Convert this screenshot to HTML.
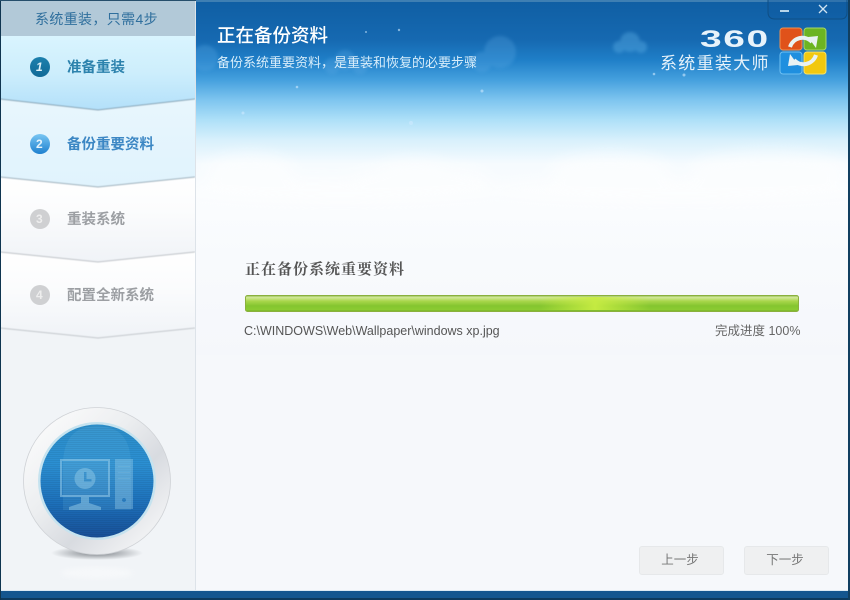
<!DOCTYPE html>
<html lang="zh"><head><meta charset="utf-8"><title>360系统重装大师</title>
<style>
html,body{margin:0;padding:0}
body{width:850px;height:600px;overflow:hidden;position:relative;background:#f6f8fb;font-family:"Liberation Sans","Noto Sans CJK SC",sans-serif}
.t{position:absolute;white-space:nowrap;line-height:1}
.tc{font-family:"Noto Sans CJK TC",sans-serif}
svg{position:absolute;left:0;top:0}
.btn{position:absolute;top:546px;width:85px;height:29px;box-sizing:border-box;background:#eff0f1;border:1px solid #e6e8ea;border-radius:3px;color:#777;font-size:12.500px;line-height:27px;text-align:center;padding-right:3px}
</style></head><body>
<svg width="850" height="600" viewBox="0 0 850 600">
<defs>
<linearGradient id="sky" gradientUnits="userSpaceOnUse" x1="0" y1="0" x2="0" y2="205">
<stop offset="0" stop-color="#0f5ea3"/><stop offset=".195" stop-color="#1669b1"/><stop offset=".293" stop-color="#1f7fc8"/><stop offset=".39" stop-color="#45a0de"/><stop offset=".488" stop-color="#7ec5ef"/><stop offset=".585" stop-color="#aee0f8"/><stop offset=".683" stop-color="#d8f0fc"/><stop offset=".8" stop-color="#f6fbfe"/><stop offset="1" stop-color="#fafcfe"/></linearGradient>
<linearGradient id="s1" x1="0" y1="0" x2="0" y2="1"><stop offset="0" stop-color="#d9f4fe"/><stop offset=".5" stop-color="#cdeefc"/><stop offset="1" stop-color="#b3e0fa"/></linearGradient>
<linearGradient id="s2" x1="0" y1="0" x2="0" y2="1"><stop offset="0" stop-color="#e8f6fd"/><stop offset="1" stop-color="#e0f3fd"/></linearGradient>
<linearGradient id="s3" x1="0" y1="0" x2="0" y2="1"><stop offset="0" stop-color="#ffffff"/><stop offset=".4" stop-color="#fbfcfd"/><stop offset="1" stop-color="#f0f3f7"/></linearGradient>
<linearGradient id="bar" x1="0" y1="0" x2="0" y2="1"><stop offset="0" stop-color="#8fb84e"/><stop offset=".12" stop-color="#d3e99a"/><stop offset=".35" stop-color="#a9d64b"/><stop offset=".65" stop-color="#84c52f"/><stop offset=".9" stop-color="#8ccb32"/><stop offset="1" stop-color="#6fa428"/></linearGradient>
<linearGradient id="glow" x1="0" y1="0" x2="1" y2="0"><stop offset="0" stop-color="#c7ec42" stop-opacity="0"/><stop offset=".5" stop-color="#c7ec42" stop-opacity=".95"/><stop offset="1" stop-color="#c7ec42" stop-opacity="0"/></linearGradient>
<linearGradient id="ring" x1="0" y1="0" x2="1" y2="1"><stop offset="0" stop-color="#ffffff"/><stop offset=".4" stop-color="#eceef0"/><stop offset=".62" stop-color="#d8dbe0"/><stop offset="1" stop-color="#ffffff"/></linearGradient>
<linearGradient id="orb" x1="0" y1="0" x2="0" y2="1"><stop offset="0" stop-color="#2d8fcb"/><stop offset=".35" stop-color="#2b8fd2"/><stop offset=".7" stop-color="#1d70ba"/><stop offset="1" stop-color="#174f97"/></linearGradient>
<linearGradient id="n1" x1="0" y1="0" x2="0" y2="1"><stop offset="0" stop-color="#1d80ad"/><stop offset="1" stop-color="#116a97"/></linearGradient>
<linearGradient id="n2" x1="0" y1="0" x2="0" y2="1"><stop offset="0" stop-color="#79c6f3"/><stop offset="1" stop-color="#1e80cf"/></linearGradient>
<linearGradient id="fade" x1="0" y1="0" x2="0" y2="1"><stop offset="0" stop-color="#fafcfe"/><stop offset="1" stop-color="#f5f7fb"/></linearGradient>
<radialGradient id="shadow"><stop offset="0" stop-color="#3d434a" stop-opacity=".65"/><stop offset="1" stop-color="#3d434a" stop-opacity="0"/></radialGradient>
<filter id="b3" x="-30%" y="-60%" width="160%" height="220%"><feGaussianBlur stdDeviation="7"/></filter>
<filter id="b1"><feGaussianBlur stdDeviation="2.500"/></filter>
<filter id="b0" x="-5%" y="-30%" width="110%" height="160%"><feGaussianBlur stdDeviation=".5"/></filter>
<filter id="bc"><feGaussianBlur stdDeviation="1.500"/></filter>
<pattern id="lines" width="2" height="2" patternUnits="userSpaceOnUse"><rect width="2" height="1" fill="#000" opacity=".06"/></pattern>
</defs>

<rect width="850" height="600" fill="#f6f8fb"/>
<rect x="196" y="0" width="654" height="205" fill="url(#sky)"/>
<rect x="196" y="205" width="654" height="386" fill="#f6f8fb"/>
<rect x="196" y="205" width="654" height="150" fill="url(#fade)"/>
<rect x="196" y="0" width="654" height="2" fill="#3e7fb3"/>
<g fill="#5eaee6" filter="url(#bc)">
<g opacity=".28"><circle cx="205" cy="58" r="13"/><circle cx="345" cy="60" r="10"/><circle cx="332" cy="66" r="8"/><circle cx="360" cy="66" r="8"/><circle cx="500" cy="52" r="16"/><circle cx="482" cy="62" r="10"/></g>
<g opacity=".4"><circle cx="630" cy="42" r="10"/><circle cx="619" cy="47" r="6"/><circle cx="641" cy="47" r="6"/></g>
</g>
<g fill="#fff" filter="url(#b3)" opacity=".5">
<ellipse cx="250" cy="172" rx="45" ry="20"/><ellipse cx="420" cy="178" rx="70" ry="14"/>
<ellipse cx="415" cy="172" rx="40" ry="14"/><ellipse cx="610" cy="172" rx="60" ry="20"/><ellipse cx="770" cy="170" rx="80" ry="20"/><ellipse cx="340" cy="190" rx="170" ry="14"/><ellipse cx="680" cy="190" rx="200" ry="14"/>
</g>
<g fill="#cfeaff" opacity=".6"><circle cx="399" cy="30" r="1.200"/><circle cx="366" cy="32" r="1"/><circle cx="297" cy="87" r="1.300"/><circle cx="482" cy="91" r="1.500"/><circle cx="411" cy="123" r="2"/><circle cx="243" cy="113" r="1.500"/><circle cx="684" cy="75" r="1.500"/><circle cx="654" cy="74" r="1.300"/></g>

<!-- sidebar -->
<rect x="0" y="0" width="196" height="600" fill="#f1f4f7"/>
<rect x="1" y="0" width="194" height="36" fill="#b2c9d8"/>
<polygon points="0,338 98,338 195,327 195,591 0,591" fill="#f1f4f7"/>
<polygon points="0,252 98,262 195,252 195,328 98,338 0,328" fill="url(#s3)"/>
<polygon points="0,177 98,187 195,177 195,252 98,262 0,252" fill="url(#s3)"/>
<polygon points="0,99 98,110 195,99 195,177 98,187 0,177" fill="url(#s2)"/>
<polygon points="0,36 195,36 195,99 98,110 0,99" fill="url(#s1)"/>
<g fill="none" stroke-width="1" filter="url(#b0)">
<polyline points="0,99 98,110 195,99" stroke="#8aa7b8"/>
<polyline points="0,177 98,187 195,177" stroke="#a0b2bd"/>
<polyline points="0,252 98,262 195,252" stroke="#bfc3c8"/>
<polyline points="0,328 98,338 195,328" stroke="#c3c7cc"/>
</g>
<rect x="195" y="0" width="1" height="591" fill="#dde3e9"/>

<circle cx="40" cy="67" r="10" fill="url(#n1)"/>
<circle cx="40" cy="144" r="10" fill="url(#n2)"/>
<circle cx="40" cy="219" r="10" fill="#cfd0d2"/>
<circle cx="40" cy="295" r="10" fill="#cfd0d2"/>

<!-- orb -->
<ellipse cx="97" cy="553" rx="46" ry="7" fill="url(#shadow)"/>
<ellipse cx="97" cy="573" rx="36" ry="6" fill="#fff" opacity=".35" filter="url(#b1)"/>
<circle cx="97" cy="481" r="73.500" fill="url(#ring)" stroke="#cfd2d6" stroke-width=".8"/>
<circle cx="97" cy="481" r="59" fill="#c6e3ef"/>
<circle cx="97" cy="481" r="56.500" fill="url(#orb)"/>
<path d="M63 465Q63 426 97 426T131 465V510H63Z" fill="#8bd5f2" opacity=".12"/>
<circle cx="97" cy="481" r="56.500" fill="url(#lines)"/>
<g fill="#a5d6ee">
<path opacity=".5" fill-rule="evenodd" d="M60 459h50v38H60zM62 461v34h46v-34z"/>
<rect x="62" y="461" width="46" height="34" opacity=".1"/>
<path opacity=".45" d="M81 497h8v6l12 4v3H69v-3l12-4z"/>
<path opacity=".4" fill-rule="evenodd" d="M85 468a10.500 10.500 0 1 0 .01 0zM84 472h2.500v7h5v2.500H84z"/>
<path opacity=".35" fill-rule="evenodd" d="M115 459h18v50h-18zM124 498a2 2 0 1 0 .01 0z"/>
<path opacity=".15" d="M118 466h12v1h-12zM118 472h12v1h-12zM118 478h12v1h-12z"/>
</g>

<!-- progress bar -->
<rect x="245.500" y="295.500" width="553" height="16" rx="2" fill="url(#bar)" stroke="#8ab03d"/>
<rect x="540" y="297" width="110" height="13" fill="url(#glow)"/>

<!-- logo -->
<rect x="780" y="28" width="22" height="22" rx="3" fill="#e0521a" stroke="#f09050"/>
<rect x="804" y="28" width="22" height="22" rx="3" fill="#6cb422" stroke="#a7d76a"/>
<rect x="780" y="52" width="22" height="22" rx="3" fill="#1f8fdf" stroke="#6fc0f2"/>
<rect x="804" y="52" width="22" height="22" rx="3" fill="#f2c80f" stroke="#f9e266"/>
<g fill="none" stroke="#e9f2f3" stroke-width="4"><path d="M790 47A13 13 0 0 1 812 42"/><path d="M816 55A13 13 0 0 1 794 60"/></g>
<polygon points="808,37 818,36 816,48" fill="#e9f2f3"/><polygon points="798,65 788,66 790,54" fill="#e9f2f3"/>

<!-- window buttons -->
<path d="M768 0V12Q768 19 775 19H841Q847 19 847 12V0" fill="#0f5b9e" fill-opacity=".3" stroke="#0f4f85"/>
<rect x="780" y="10" width="9" height="2" fill="#b7d5ea"/>
<path d="M819 5l8 8M827 5l-8 8" stroke="#cfe3f1" stroke-width="1.300"/>

<!-- frame -->
<rect x="0" y="591" width="850" height="7" fill="#14568f"/>
<rect x="0" y="598" width="850" height="2" fill="#0d3a5e"/>
<rect x="0" y="590" width="850" height="1" fill="#dbe9f3"/>
<rect x="0" y="0" width="1" height="600" fill="#0f3550"/>
<rect x="848" y="0" width="2" height="600" fill="#113f60"/>
<rect x="0" y="0" width="196" height="1" fill="#264f6c"/>
</svg>

<div class="t" style="left:35px;top:12px;font-size:14px;letter-spacing:.35px;color:#2f6f9d">系统重装<span class="tc">，</span>只需4步</div>
<div class="t" style="left:67px;top:61px;font-size:14.500px;font-weight:700;color:#2c82ad">准备重装</div>
<div class="t" style="left:67px;top:138px;font-size:14.500px;font-weight:700;color:#3c87c4">备份重要资料</div>
<div class="t" style="left:67px;top:213px;font-size:14.500px;font-weight:700;color:#9c9fa3">重装系统</div>
<div class="t" style="left:67px;top:289px;font-size:14.500px;font-weight:700;color:#9c9fa3">配置全新系统</div>
<div class="t" style="left:36px;top:61px;font-size:12px;font-weight:700;font-style:italic;color:#dff1f8">1</div>
<div class="t" style="left:36px;top:138px;font-size:12px;font-weight:700;color:#e6f4fc">2</div>
<div class="t" style="left:36px;top:213px;font-size:12px;font-weight:700;color:#eee">3</div>
<div class="t" style="left:36px;top:289px;font-size:12px;font-weight:700;color:#eee">4</div>

<div class="t" style="left:217px;top:27px;font-size:18.500px;font-weight:500;color:#fff">正在备份资料</div>
<div class="t" style="left:217px;top:55px;font-size:13px;color:#d8edfa">备份系统重要资料<span class="tc">，</span>是重装和恢复的必要步骤</div>

<div class="t" style="left:700px;top:28px;font-size:24px;letter-spacing:1px;transform:scaleX(1.62);transform-origin:left;color:#e8f3fb;font-weight:700">360</div>
<div class="t" style="left:660px;top:55px;font-size:17px;letter-spacing:1.300px;color:#e6f2fa">系统重装大师</div>

<div class="t" style="left:245px;top:261px;font-size:15px;font-weight:700;letter-spacing:1px;font-family:'Noto Serif CJK SC',serif;color:#555">正在备份系统重要资料</div>
<div class="t" style="left:244px;top:325px;font-size:12.500px;color:#555">C:\WINDOWS\Web\Wallpaper\windows xp.jpg</div>
<div class="t" style="left:715px;top:325px;font-size:12.500px;color:#666">完成进度 100%</div>

<div class="btn" style="left:639px">上一步</div>
<div class="btn" style="left:744px">下一步</div>
</body></html>
